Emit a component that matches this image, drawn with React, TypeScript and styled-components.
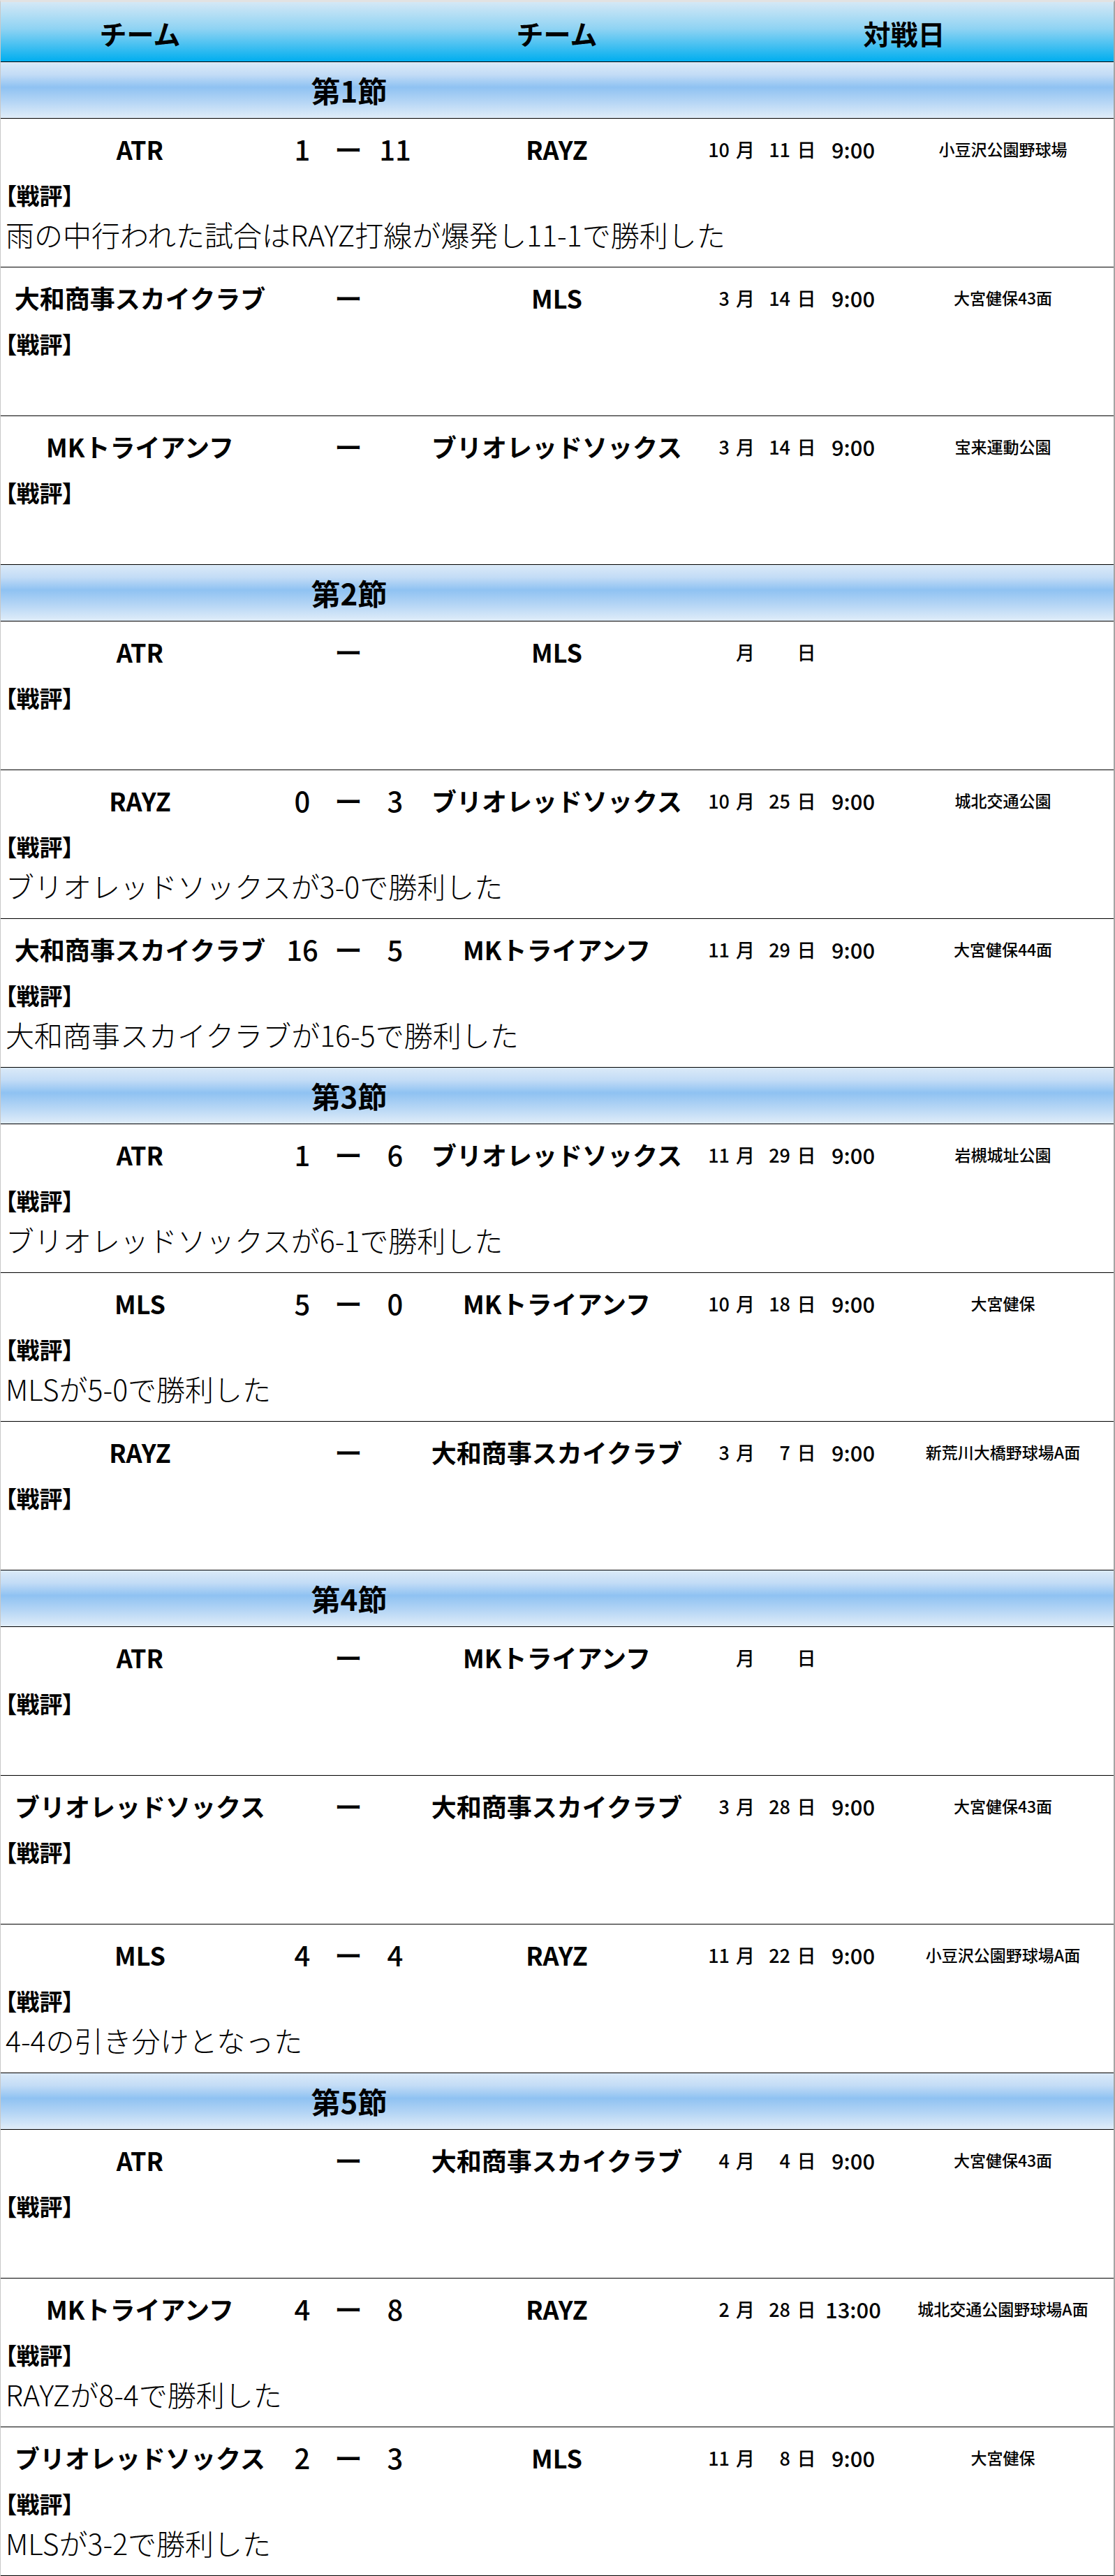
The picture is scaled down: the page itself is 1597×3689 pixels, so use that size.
import React from 'react';
import styled, { createGlobalStyle } from 'styled-components';

const GlobalStyle = createGlobalStyle`
  html, body {
    margin: 0;
    padding: 0;
    background: #fff;
  }
  body {
    font-family: "Noto Sans CJK JP", "Noto Sans", sans-serif;
    color: #000;
  }
`;

const columns = '399px 66px 66px 68px 395px 283px 317px';

const Table = styled.div`
  width: 1597px;
  box-sizing: border-box;
  border-top: 3px solid #e2e2e2;
  border-left: 1px solid #c8c8c8;
  border-right: 2px solid #a4a4a4;
  background: #fff;
`;

const HeaderRow = styled.div`
  display: grid;
  grid-template-columns: ${columns};
  height: 85px;
  align-items: center;
  border-bottom: 1px solid #000;
  background: linear-gradient(to bottom, #d4e8f6 0%, #8fd3f3 45%, #00aeef 100%);
`;

const HeadCell = styled.div<{ $span?: number }>`
  grid-column: span ${p => p.$span || 1};
  text-align: center;
  font-size: 39px;
  font-weight: 700;
  line-height: 1;
  padding-top: 4px;
`;

const SectionRow = styled.div`
  display: grid;
  grid-template-columns: ${columns};
  height: 80px;
  align-items: center;
  border-bottom: 1px solid #000;
  background: linear-gradient(to bottom, #dbeaf8 0%, #c3dcf6 22%, #8fc2f2 45%, #b6d6f5 72%, #e0edf9 100%);
`;

const SectionTitle = styled.div`
  grid-column: 2 / span 3;
  text-align: center;
  font-size: 42px;
  font-weight: 700;
  line-height: 1;
`;

const MatchRow = styled.div`
  height: 212px;
  border-bottom: 1px solid #000;
  display: flex;
  flex-direction: column;
`;

const MatchLine = styled.div`
  display: grid;
  grid-template-columns: ${columns};
  height: 86px;
  align-items: center;
`;

const Team = styled.div`
  text-align: center;
  font-size: 36px;
  font-weight: 700;
  white-space: nowrap;
  line-height: 1;
`;

const Score = styled.div`
  text-align: center;
  font-size: 40px;
  font-weight: 500;
  line-height: 1;
`;

const DateBox = styled.div`
  display: grid;
  grid-template-columns: 50px 45px 42px 46px 88px;
  align-items: center;
  font-size: 27px;
  font-weight: 500;
  line-height: 1;
`;

const DateNum = styled.span`
  text-align: right;
`;

const DateUnit = styled.span`
  text-align: center;
`;

const DateTime = styled.span`
  text-align: center;
  font-size: 31px;
`;

const Venue = styled.div`
  text-align: center;
  font-size: 23px;
  font-weight: 500;
  white-space: nowrap;
  line-height: 1;
`;

const ReviewLabel = styled.div`
  height: 46px;
  display: flex;
  align-items: center;
  padding-left: 6px;
  font-size: 33px;
  font-weight: 700;
  font-feature-settings: "palt";
`;

const ReviewText = styled.div`
  height: 66px;
  display: flex;
  align-items: center;
  padding-left: 7px;
  font-size: 41px;
  font-weight: 300;
  white-space: nowrap;
`;

interface Match {
  home: string;
  away: string;
  homeScore?: string;
  awayScore?: string;
  month?: string;
  day?: string;
  time?: string;
  venue?: string;
  review?: string;
}

interface Round {
  title: string;
  matches: Match[];
}

const rounds: Round[] = [
  {
    title: '第1節',
    matches: [
      { home: 'ATR', homeScore: '1', awayScore: '11', away: 'RAYZ', month: '10', day: '11', time: '9:00', venue: '小豆沢公園野球場', review: '雨の中行われた試合はRAYZ打線が爆発し11-1で勝利した' },
      { home: '大和商事スカイクラブ', away: 'MLS', month: '3', day: '14', time: '9:00', venue: '大宮健保43面' },
      { home: 'MKトライアンフ', away: 'ブリオレッドソックス', month: '3', day: '14', time: '9:00', venue: '宝来運動公園' },
    ],
  },
  {
    title: '第2節',
    matches: [
      { home: 'ATR', away: 'MLS' },
      { home: 'RAYZ', homeScore: '0', awayScore: '3', away: 'ブリオレッドソックス', month: '10', day: '25', time: '9:00', venue: '城北交通公園', review: 'ブリオレッドソックスが3-0で勝利した' },
      { home: '大和商事スカイクラブ', homeScore: '16', awayScore: '5', away: 'MKトライアンフ', month: '11', day: '29', time: '9:00', venue: '大宮健保44面', review: '大和商事スカイクラブが16-5で勝利した' },
    ],
  },
  {
    title: '第3節',
    matches: [
      { home: 'ATR', homeScore: '1', awayScore: '6', away: 'ブリオレッドソックス', month: '11', day: '29', time: '9:00', venue: '岩槻城址公園', review: 'ブリオレッドソックスが6-1で勝利した' },
      { home: 'MLS', homeScore: '5', awayScore: '0', away: 'MKトライアンフ', month: '10', day: '18', time: '9:00', venue: '大宮健保', review: 'MLSが5-0で勝利した' },
      { home: 'RAYZ', away: '大和商事スカイクラブ', month: '3', day: '7', time: '9:00', venue: '新荒川大橋野球場A面' },
    ],
  },
  {
    title: '第4節',
    matches: [
      { home: 'ATR', away: 'MKトライアンフ' },
      { home: 'ブリオレッドソックス', away: '大和商事スカイクラブ', month: '3', day: '28', time: '9:00', venue: '大宮健保43面' },
      { home: 'MLS', homeScore: '4', awayScore: '4', away: 'RAYZ', month: '11', day: '22', time: '9:00', venue: '小豆沢公園野球場A面', review: '4-4の引き分けとなった' },
    ],
  },
  {
    title: '第5節',
    matches: [
      { home: 'ATR', away: '大和商事スカイクラブ', month: '4', day: '4', time: '9:00', venue: '大宮健保43面' },
      { home: 'MKトライアンフ', homeScore: '4', awayScore: '8', away: 'RAYZ', month: '2', day: '28', time: '13:00', venue: '城北交通公園野球場A面', review: 'RAYZが8-4で勝利した' },
      { home: 'ブリオレッドソックス', homeScore: '2', awayScore: '3', away: 'MLS', month: '11', day: '8', time: '9:00', venue: '大宮健保', review: 'MLSが3-2で勝利した' },
    ],
  },
];

function MatchItem({ m }: { m: Match }) {
  return (
    <MatchRow>
      <MatchLine>
        <Team>{m.home}</Team>
        <Score>{m.homeScore}</Score>
        <Score>ー</Score>
        <Score>{m.awayScore}</Score>
        <Team>{m.away}</Team>
        <DateBox>
          <DateNum>{m.month}</DateNum>
          <DateUnit>月</DateUnit>
          <DateNum>{m.day}</DateNum>
          <DateUnit>日</DateUnit>
          <DateTime>{m.time}</DateTime>
        </DateBox>
        <Venue>{m.venue}</Venue>
      </MatchLine>
      <ReviewLabel>【戦評】</ReviewLabel>
      <ReviewText>{m.review}</ReviewText>
    </MatchRow>
  );
}

export default function App() {
  return (
    <>
      <GlobalStyle />
      <Table>
        <HeaderRow>
          <HeadCell>チーム</HeadCell>
          <HeadCell $span={3} />
          <HeadCell>チーム</HeadCell>
          <HeadCell $span={2}>対戦日</HeadCell>
        </HeaderRow>
        {rounds.map(r => (
          <React.Fragment key={r.title}>
            <SectionRow>
              <div />
              <SectionTitle>{r.title}</SectionTitle>
            </SectionRow>
            {r.matches.map((m, idx) => (
              <MatchItem key={idx} m={m} />
            ))}
          </React.Fragment>
        ))}
      </Table>
    </>
  );
}
